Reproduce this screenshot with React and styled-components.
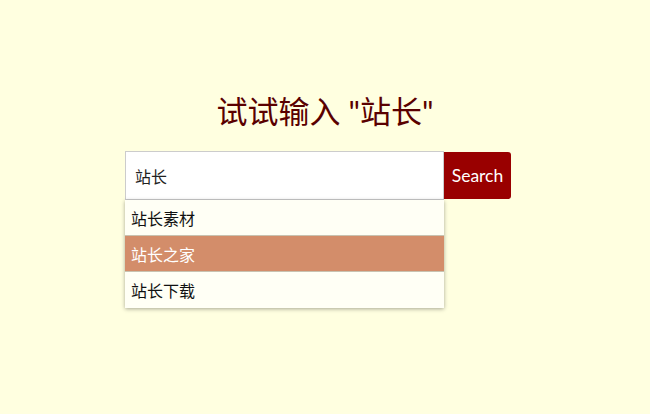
import React from "react";
import styled, { createGlobalStyle } from "styled-components";

const GlobalStyle = createGlobalStyle`
  html, body {
    margin: 0;
    padding: 0;
    background: #ffffe0;
  }
  body {
    font-family: "Noto Sans CJK SC", "Noto Sans", sans-serif;
  }
`;

const Page = styled.div`
  width: 650px;
  height: 414px;
  display: flex;
  flex-direction: column;
  align-items: center;
  padding-top: 90px;
  box-sizing: border-box;
`;

const Title = styled.h1`
  margin: 0 0 19px;
  font-size: 31px;
  font-weight: 400;
  line-height: 42px;
  color: #5a0000;
  font-family: "Lato", "Noto Sans CJK SC", sans-serif;
`;

const SearchWrap = styled.div`
  position: relative;
  display: flex;
  align-items: center;
  width: 386px;
  margin-right: 14px;
`;

const Input = styled.input`
  width: 319px;
  height: 49px;
  box-sizing: border-box;
  border: 1px solid #cccccc;
  background: #fff;
  padding: 0 9px;
  font-size: 16px;
  color: #222;
  font-family: "Lato", "Noto Sans CJK SC", sans-serif;
  outline: none;
`;

const Button = styled.button`
  width: 67px;
  height: 47px;
  border: none;
  border-radius: 0 3px 3px 0;
  background: #990000;
  color: #fff;
  font-size: 17.5px;
  font-family: "Lato", "Noto Sans", sans-serif;
  padding: 0;
  cursor: pointer;
`;

const Menu = styled.ul`
  position: absolute;
  top: 49px;
  left: 0;
  width: 319px;
  margin: 0;
  padding: 0;
  list-style: none;
  box-sizing: border-box;
  box-shadow: 0 1px 4px rgba(0, 0, 0, 0.35);
`;

const Item = styled.li`
  height: 36px;
  box-sizing: border-box;
  padding: 0 6px;
  display: flex;
  align-items: center;
  font-size: 16px;
  font-family: "Lato", "Noto Sans CJK SC", sans-serif;
  background: ${(p) => (p.$active ? "#d38d6a" : "#fffff5")};
  color: ${(p) => (p.$active ? "#fff" : "#111")};
  border-bottom: 1px solid ${(p) => (p.$last ? "transparent" : "#c8c2b0")};
`;

const items = ["站长素材", "站长之家", "站长下载"];

export default function App() {
  return (
    <Page>
      <GlobalStyle />
      <Title>试试输入 "站长"</Title>
      <SearchWrap>
        <Input defaultValue="站长" />
        <Button>Search</Button>
        <Menu>
          {items.map((t, i) => (
            <Item key={t} $active={i === 1} $last={i === items.length - 1}>
              {t}
            </Item>
          ))}
        </Menu>
      </SearchWrap>
    </Page>
  );
}
